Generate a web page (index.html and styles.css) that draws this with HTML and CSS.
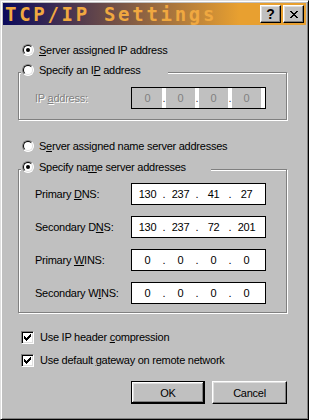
FILE: index.html
```html
<!DOCTYPE html>
<html lang="en">
<head>
  <meta charset="UTF-8" />
  <meta name="viewport" content="width=device-width, initial-scale=1.0"/>
  <title>TCP/IP Settings</title>
  <link rel="stylesheet" href="styles.css">
</head>
<body>

  <div class="window">
    <div class="titlebar">
      <span class="title">TCP/IP Settings</span>
      <button class="cap-btn help">?</button>
      <button class="cap-btn close">
        <svg width="8" height="7" viewBox="0 0 8 7" shape-rendering="crispEdges"><path d="M0 0h2v1h-2z M6 0h2v1h-2z M1 1h2v1h-2z M5 1h2v1h-2z M2 2h4v1h-4z M3 3h2v1h-2z M2 4h4v1h-4z M1 5h2v1h-2z M5 5h2v1h-2z M0 6h2v1h-2z M6 6h2v1h-2z" fill="#000"/></svg>
      </button>
    </div>

    <div class="content">
      <!-- IP address -->
      <label class="opt top"><span class="radio on"></span><span><u>S</u>erver assigned IP address</span></label>

      <fieldset class="group ip-group">
        <legend class="legend first"><label class="opt"><span class="radio"></span><span>Specify an I<u>P</u> address</span></label></legend>
        <div class="fields">
          <span class="disabled">IP <u>a</u>ddress:</span>
          <div class="ip off">
            <span class="seg">0</span><span class="dot">.</span>
            <span class="seg">0</span><span class="dot">.</span>
            <span class="seg">0</span><span class="dot">.</span>
            <span class="seg">0</span><span class="dot"></span>
          </div>
        </div>
      </fieldset>

      <!-- Name servers -->
      <label class="opt top ns"><span class="radio"></span><span>S<u>e</u>rver assigned name server addresses</span></label>

      <fieldset class="group dns-group">
        <legend class="legend second"><label class="opt"><span class="radio on"></span><span>Specify na<u>m</u>e server addresses</span></label></legend>
        <div class="fields">
          <span>Primary <u>D</u>NS:</span>
          <div class="ip">
            <span class="seg">130</span><span class="dot">.</span>
            <span class="seg">237</span><span class="dot">.</span>
            <span class="seg">41</span><span class="dot">.</span>
            <span class="seg">27</span><span class="dot"></span>
          </div>

          <span>Secondary D<u>N</u>S:</span>
          <div class="ip">
            <span class="seg">130</span><span class="dot">.</span>
            <span class="seg">237</span><span class="dot">.</span>
            <span class="seg">72</span><span class="dot">.</span>
            <span class="seg">201</span><span class="dot"></span>
          </div>

          <span>Primary <u>W</u>INS:</span>
          <div class="ip">
            <span class="seg">0</span><span class="dot">.</span>
            <span class="seg">0</span><span class="dot">.</span>
            <span class="seg">0</span><span class="dot">.</span>
            <span class="seg">0</span><span class="dot"></span>
          </div>

          <span>Secondary W<u>I</u>NS:</span>
          <div class="ip">
            <span class="seg">0</span><span class="dot">.</span>
            <span class="seg">0</span><span class="dot">.</span>
            <span class="seg">0</span><span class="dot">.</span>
            <span class="seg">0</span><span class="dot"></span>
          </div>
        </div>
      </fieldset>

      <!-- Options -->
      <label class="opt check-row first-check"><span class="check"><svg width="7" height="7" viewBox="0 0 7 7" shape-rendering="crispEdges"><path d="M6 0h1v1h-1z M5 1h2v1h-2z M0 2h1v1h-1z M4 2h3v1h-3z M0 3h2v1h-2z M3 3h3v1h-3z M0 4h5v1h-5z M1 5h3v1h-3z M2 6h1v1h-1z" fill="#000"/></svg></span><span>Use IP header <u>c</u>ompression</span></label>
      <label class="opt check-row"><span class="check"><svg width="7" height="7" viewBox="0 0 7 7" shape-rendering="crispEdges"><path d="M6 0h1v1h-1z M5 1h2v1h-2z M0 2h1v1h-1z M4 2h3v1h-3z M0 3h2v1h-2z M3 3h3v1h-3z M0 4h5v1h-5z M1 5h3v1h-3z M2 6h1v1h-1z" fill="#000"/></svg></span><span>Use default <u>g</u>ateway on remote network</span></label>

      <div class="actions">
        <button class="btn default ok">OK</button>
        <button class="btn cancel">Cancel</button>
      </div>
    </div>
  </div>

</body>
</html>
```

FILE: styles.css
```css
* { box-sizing: border-box; }
body {
  margin: 0;
  font-family: "Liberation Sans", Arial, sans-serif;
  font-size: 11px;
  letter-spacing: -0.25px;
  color: #000;
}
u { text-decoration-thickness: 1px; }

.window {
  width: 309px;
  height: 420px;
  padding: 2px;
  background: #c0c0c0;
  border: 1px solid;
  border-color: #dfdfdf #000 #000 #dfdfdf;
  box-shadow: inset 1px 1px #fff, inset -1px -1px #808080;
}

/* Title bar */
.titlebar {
  display: flex;
  align-items: center;
  gap: 2px;
  height: 22px;
  padding: 0 2px 0 2px;
  background: linear-gradient(to right, #0a0a5c, #e8a030 78%);
}
.title {
  flex: 1;
  font: bold 19px "DejaVu Sans Mono", monospace;
  letter-spacing: 2.7px;
  color: #f0a840;
  white-space: nowrap;
}
.cap-btn {
  width: 21px;
  height: 18px;
  padding: 0;
  display: flex;
  align-items: center;
  justify-content: center;
  background: #c0c0c0;
  border: 1px solid;
  border-color: #fff #000 #000 #fff;
  box-shadow: inset -1px -1px #808080, inset 1px 1px #dfdfdf;
}
.cap-btn.help {
  font: bold 14px "Liberation Sans", Arial, sans-serif;
  line-height: 1;
  color: #000;
}

/* Dialog body */
.content {
  padding: 17px 19px 0 15px;
}
.opt {
  display: flex;
  align-items: center;
  gap: 5px;
  height: 16px;
  white-space: nowrap;
}
.opt.top { padding-left: 4px; }
.opt.ns { margin-top: 18px; }

.radio {
  position: relative;
  flex: none;
  width: 12px;
  height: 12px;
  border-radius: 50%;
  background: #fff;
  border: 1px solid;
  border-color: #808080 #fff #fff #808080;
}
.radio::before {
  content: "";
  position: absolute;
  inset: 0;
  border-radius: 50%;
  border: 1px solid;
  border-color: #000 #dfdfdf #dfdfdf #000;
}
.radio.on::after {
  content: "";
  position: absolute;
  left: 3px;
  top: 3px;
  width: 4px;
  height: 4px;
  border-radius: 50%;
  background: #000;
}

/* Group boxes */
.group {
  margin: 4px 0 0;
  padding: 5px 0 10px 2px;
  min-width: 0;
  border: 1px solid #808080;
  box-shadow: inset 1px 1px #fff, 1px 1px #fff;
}
.dns-group {
  margin-top: 5px;
  padding-top: 4px;
  padding-bottom: 8px;
}
.legend {
  padding: 0 0 4px 1px;
  background: #c0c0c0;
}
.legend.first { width: 147px; }
.legend.second { width: 190px; }

.fields {
  display: grid;
  grid-template-columns: 96px 135px;
  align-items: center;
  row-gap: 11px;
  margin-left: 14px;
}
.disabled {
  color: #808080;
  text-shadow: 1px 1px #fff;
}

.ip {
  display: flex;
  height: 22px;
  padding-left: 1px;
  line-height: 20px;
  background: #fff;
  border: 1px solid #000;
}
.seg {
  width: 29px;
  text-align: center;
}
.dot {
  width: 4px;
  text-align: center;
  background: #fff;
}
.ip.off { background: #c0c0c0; }
.ip.off .seg { color: #808080; }
.ip.off .dot { color: #404040; }

/* Check boxes */
.check-row { gap: 6px; margin-left: 3px; }
.first-check { margin-top: 16px; }
.check-row + .check-row { margin-top: 7px; }
.check {
  flex: none;
  width: 13px;
  height: 13px;
  display: flex;
  align-items: center;
  justify-content: center;
  background: #fff;
  border: 1px solid;
  border-color: #808080 #fff #fff #808080;
  box-shadow: inset 1px 1px #000, inset -1px -1px #dfdfdf;
}

/* Buttons */
.actions {
  display: flex;
  justify-content: flex-end;
  gap: 7px;
  margin-top: 13px;
}
.btn {
  height: 23px;
  padding: 0;
  font: inherit;
  letter-spacing: inherit;
  color: #000;
  background: #c0c0c0;
  border: 1px solid;
  border-color: #fff #000 #000 #fff;
  box-shadow: inset -1px -1px #808080, inset 1px 1px #dfdfdf;
}
.btn.ok { width: 74px; }
.btn.cancel { width: 75px; }
.btn.default {
  border-color: #000;
  box-shadow: inset -1px -1px #000, inset 1px 1px #fff, inset -2px -2px #808080, inset 2px 2px #dfdfdf;
}
```
